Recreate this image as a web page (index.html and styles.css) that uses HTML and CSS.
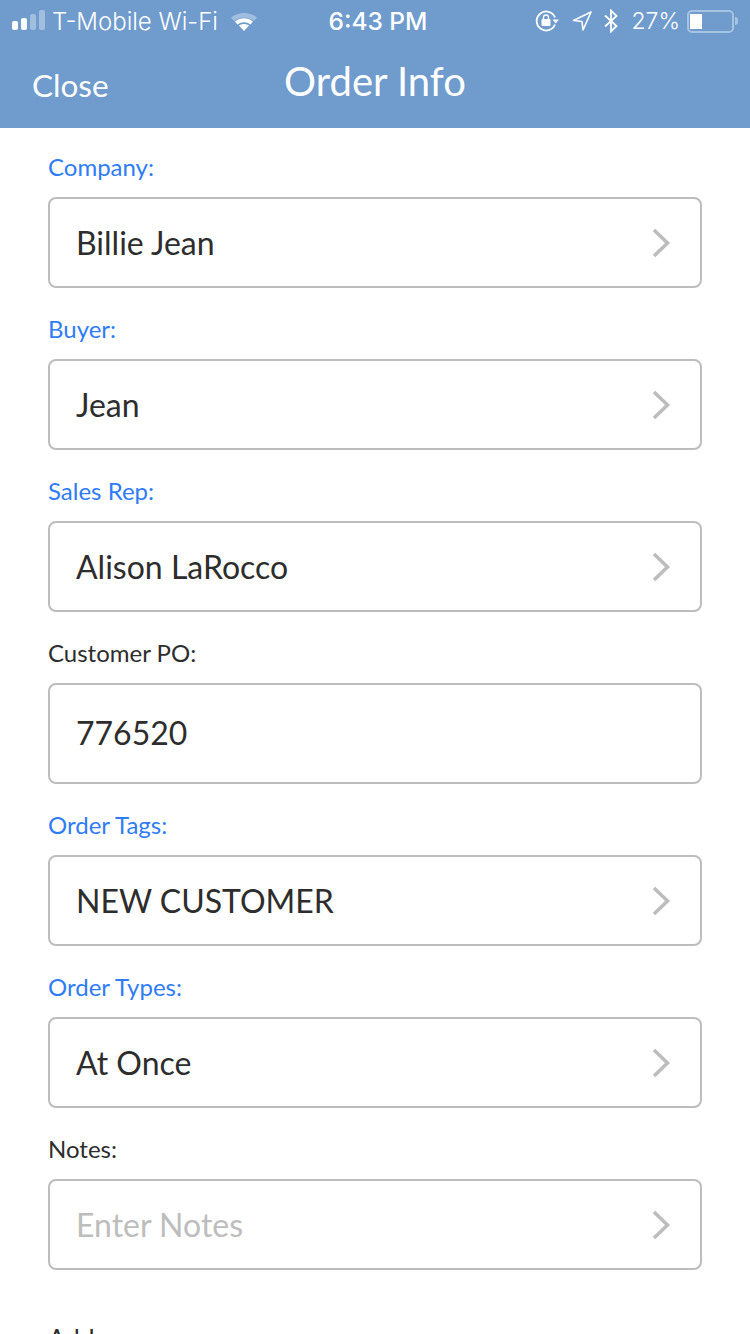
FILE: index.html
```html
<!DOCTYPE html>
<html lang="en">
<head>
    <meta charset="UTF-8">
    <meta name="viewport" content="width=device-width, initial-scale=1.0">
    <title>Order Info</title>
    <link rel="stylesheet" href="styles.css">
</head>
<body>
    <header class="top">
        <div class="status">
            <div class="status-left">
                <div class="signal">
                    <span class="bar bar1"></span>
                    <span class="bar bar2"></span>
                    <span class="bar bar3 dim"></span>
                    <span class="bar bar4 dim"></span>
                </div>
                <span class="carrier">T-Mobile Wi-Fi</span>
                <svg class="wifi" width="28" height="20" viewBox="0 0 28 20">
                    <path d="M1 6.500C8.500 0.500 19.500 0.500 27 6.500L24 10C18 5.300 10 5.300 4 10Z" fill="#fff" fill-opacity="0.35"/>
                    <path d="M5 10.500C10.500 6.300 17.500 6.300 23 10.500L20.500 13.500C16.500 10.500 11.500 10.500 7.500 13.500Z" fill="#fff"/>
                    <path d="M9 14.500C12 12.500 16 12.500 19 14.500L14 20Z" fill="#fff"/>
                </svg>
            </div>
            <span class="clock">6:43 PM</span>
            <div class="status-right">
                <svg class="lock" width="24" height="22" viewBox="0 0 24 22">
                    <path d="M20 14.500A9.500 9.500 0 1 1 20 7.500" fill="none" stroke="#fff" stroke-width="1.800"/>
                    <path d="M17.500 9.500L24 9.500L20.700 13.500Z" fill="#fff"/>
                    <rect x="6.500" y="9" width="9" height="7" rx="1" fill="#fff"/>
                    <path d="M8.500 9V7.500a2.500 2.500 0 0 1 5 0V9" fill="none" stroke="#fff" stroke-width="1.300"/>
                </svg>
                <svg class="arrow" width="20" height="20" viewBox="0 0 20 20">
                    <path d="M19 1L1.500 9.500L10 10.500L11 19Z" fill="none" stroke="#fff" stroke-width="1.600" stroke-linejoin="round"/>
                </svg>
                <svg class="bt" width="16" height="24" viewBox="0 0 16 24">
                    <path d="M2 6.500L13.500 17L8 22.500V1.500L13.500 7L2 17.500" fill="none" stroke="#fff" stroke-width="1.800"/>
                </svg>
                <span class="pct">27%</span>
                <div class="battery">
                    <div class="battery-body">
                        <div class="battery-fill"></div>
                    </div>
                    <span class="battery-tip"></span>
                </div>
            </div>
        </div>
        <div class="nav">
            <span class="close">Close</span>
            <span class="title">Order Info</span>
        </div>
    </header>

    <main class="form">
        <div class="field">
            <div class="label link">Company:</div>
            <div class="box">
                <span class="value">Billie Jean</span>
                <svg class="chev" width="20" height="32" viewBox="0 0 20 32"><path d="M3 3L16.500 16L3 29" fill="none" stroke="#bdbdbd" stroke-width="3.600"/></svg>
            </div>
        </div>
        <div class="field">
            <div class="label link">Buyer:</div>
            <div class="box">
                <span class="value">Jean</span>
                <svg class="chev" width="20" height="32" viewBox="0 0 20 32"><path d="M3 3L16.500 16L3 29" fill="none" stroke="#bdbdbd" stroke-width="3.600"/></svg>
            </div>
        </div>
        <div class="field">
            <div class="label link">Sales Rep:</div>
            <div class="box">
                <span class="value">Alison LaRocco</span>
                <svg class="chev" width="20" height="32" viewBox="0 0 20 32"><path d="M3 3L16.500 16L3 29" fill="none" stroke="#bdbdbd" stroke-width="3.600"/></svg>
            </div>
        </div>
        <div class="field">
            <div class="label">Customer PO:</div>
            <div class="box tall">
                <span class="value">776520</span>
            </div>
        </div>
        <div class="field">
            <div class="label link">Order Tags:</div>
            <div class="box">
                <span class="value">NEW CUSTOMER</span>
                <svg class="chev" width="20" height="32" viewBox="0 0 20 32"><path d="M3 3L16.500 16L3 29" fill="none" stroke="#bdbdbd" stroke-width="3.600"/></svg>
            </div>
        </div>
        <div class="field">
            <div class="label link">Order Types:</div>
            <div class="box">
                <span class="value">At Once</span>
                <svg class="chev" width="20" height="32" viewBox="0 0 20 32"><path d="M3 3L16.500 16L3 29" fill="none" stroke="#bdbdbd" stroke-width="3.600"/></svg>
            </div>
        </div>
        <div class="field">
            <div class="label">Notes:</div>
            <div class="box">
                <span class="value placeholder">Enter Notes</span>
                <svg class="chev" width="20" height="32" viewBox="0 0 20 32"><path d="M3 3L16.500 16L3 29" fill="none" stroke="#bdbdbd" stroke-width="3.600"/></svg>
            </div>
        </div>
        <div class="field">
            <div class="address">Address:</div>
        </div>
    </main>
</body>
</html>
```

FILE: styles.css
```css
html, body {
    margin: 0;
    height: 1334px;
    overflow: hidden;
    background: #fff;
}
body {
    font-family: Lato, "Open Sans", sans-serif;
    color: #2d2d2d;
}
.top {
    height: 128px;
    background: #6f9bcd;
    color: #fff;
}
.status {
    height: 42px;
    display: grid;
    grid-template-columns: 1fr auto 1fr;
    align-items: center;
    font-family: Inter, Roboto, sans-serif;
}
.status-left {
    display: flex;
    align-items: center;
    padding-left: 12px;
}
.signal {
    display: flex;
    align-items: flex-end;
    gap: 3px;
    height: 20px;
    margin: 0 7px 2px 0;
}
.bar {
    width: 6px;
    border-radius: 2px;
    background: #fff;
}
.bar1 { height: 9px; }
.bar2 { height: 12px; }
.bar3 { height: 16px; }
.bar4 { height: 20px; }
.dim {
    opacity: 0.35;
}
.carrier {
    font-size: 24px;
    font-weight: 300;
}
.wifi {
    margin-left: 12px;
}
.clock {
    margin-left: 6px;
    font-size: 24.500px;
    font-weight: 500;
}
.status-right {
    display: flex;
    align-items: center;
    justify-content: flex-end;
    padding-right: 12px;
}
.arrow {
    margin-left: 13px;
}
.bt {
    margin-left: 11px;
}
.pct {
    margin-left: 12px;
    font-size: 23px;
    font-weight: 300;
}
.battery {
    display: flex;
    align-items: center;
    margin-left: 7px;
}
.battery-body {
    width: 47px;
    height: 23px;
    box-sizing: border-box;
    padding: 2px 1px;
    border: 2px solid rgba(255, 255, 255, 0.4);
    border-radius: 5px;
}
.battery-fill {
    width: 12px;
    height: 100%;
    background: #fff;
}
.battery-tip {
    width: 3px;
    height: 8px;
    margin-left: 1px;
    border-radius: 0 3px 3px 0;
    background: rgba(255, 255, 255, 0.4);
}
.nav {
    position: relative;
    display: flex;
    justify-content: center;
    align-items: center;
    height: 82px;
}
.close {
    position: absolute;
    left: 32px;
    top: 24px;
    font-size: 31.500px;
    font-weight: 400;
}
.title {
    margin-bottom: 4px;
    font-size: 40px;
    font-weight: 400;
}
.form {
    padding: 22px 48px 0;
}
.field {
    margin-bottom: 24px;
}
.label {
    height: 47px;
    padding-top: 2px;
    box-sizing: border-box;
    font-size: 24px;
    line-height: 30px;
}
.link {
    color: #2f7cf6;
}
.address {
    padding-top: 30px;
    font-size: 26px;
    line-height: 30px;
}
.box {
    display: flex;
    justify-content: space-between;
    align-items: center;
    height: 91px;
    box-sizing: border-box;
    padding: 0 29px 0 26px;
    border: 2px solid #bdbdbd;
    border-radius: 8px;
}
.tall {
    height: 101px;
    padding-bottom: 2px;
}
.value {
    font-size: 32px;
}
.placeholder {
    color: #bdbdbd;
}
```
